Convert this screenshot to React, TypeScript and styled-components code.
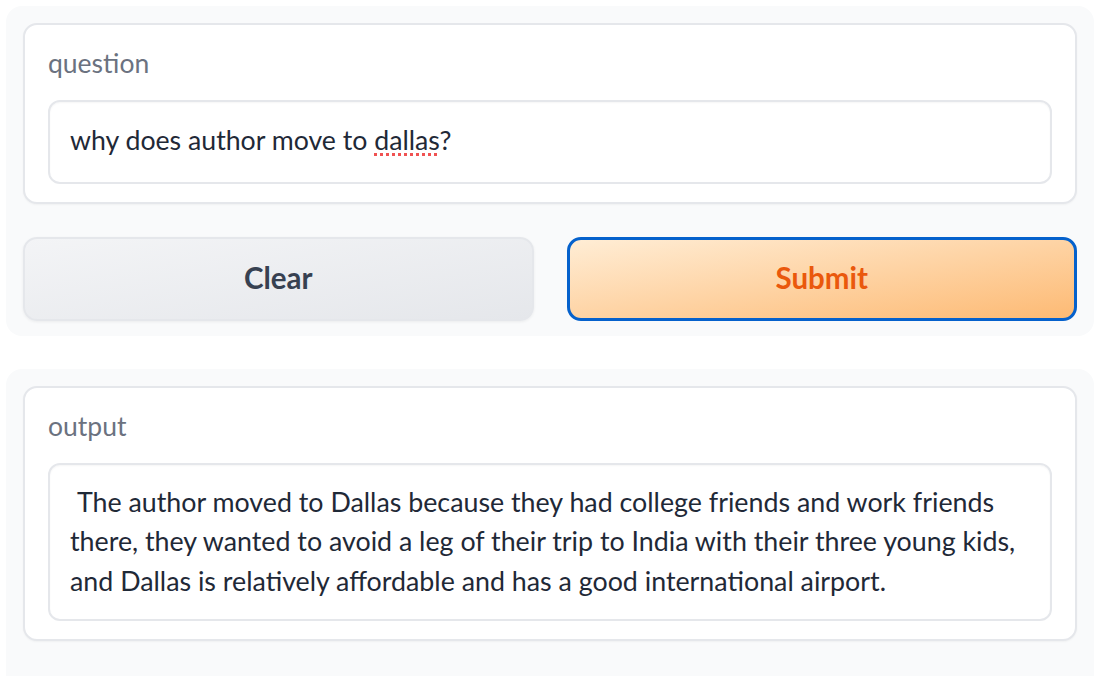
import { FC } from "react";
import styled, { createGlobalStyle } from "styled-components";

const Colors = {
  panel: "#f9fafb",
  border: "#e5e7eb",
  label: "#6b7280",
  text: "#1f2937",
  white: "#ffffff",
};

const GlobalStyle = createGlobalStyle`
  html, body {
    margin: 0;
    padding: 0;
    background: ${Colors.white};
  }
  body {
    font-family: "Lato", "Noto Sans", sans-serif;
  }
`;

const Page = styled.div`
  display: flex;
  flex-direction: column;
  gap: 33px;
  padding: 6px 8px 0 6px;
  width: 1102px;
  box-sizing: border-box;
`;

const Panel = styled.div<{ $open?: boolean }>`
  display: flex;
  flex-direction: column;
  gap: 33px;
  background: ${Colors.panel};
  border-radius: ${(p) => (p.$open ? "16px 16px 0 0" : "16px")};
  padding: 17px 17px ${(p) => (p.$open ? "36px" : "15px")} 17px;
`;

const Card = styled.div`
  display: flex;
  flex-direction: column;
  background: ${Colors.white};
  border: 2px solid ${Colors.border};
  border-radius: 14px;
  box-shadow: 0 1px 2px rgba(0, 0, 0, 0.04);
  padding: 22px 23px 18px 23px;
`;

const Label = styled.div`
  color: ${Colors.label};
  font-size: 26.5px;
  line-height: 32px;
  margin-bottom: 21px;
`;

const Field = styled.div<{ $multi?: boolean }>`
  border: 2px solid ${Colors.border};
  border-radius: 12px;
  box-shadow: inset 0 1px 2px rgba(0, 0, 0, 0.04);
  color: ${Colors.text};
  font-size: ${(p) => (p.$multi ? "26.8px" : "26.7px")};
  line-height: 39.5px;
  padding: ${(p) => (p.$multi ? "18px 8px 18px 20px" : "19px 20px 21px")};
  white-space: pre-wrap;
`;

const Misspelled = styled.span`
  text-decoration: underline dotted #f05252;
  text-decoration-thickness: 3px;
  text-underline-offset: 3px;
`;

const ButtonRow = styled.div`
  display: grid;
  grid-template-columns: 1fr 1fr;
  gap: 33px;
`;

const Button = styled.button<{ $primary?: boolean }>`
  height: 84px;
  border-radius: 14px;
  font-family: inherit;
  font-weight: 700;
  font-size: 29.5px;
  padding: 0 0 2px;
  cursor: pointer;
  ${(p) =>
    p.$primary
      ? `
    background: linear-gradient(to bottom right, #ffedd5, #fdba74);
    border: 3px solid #0561cc;
    color: #ea580c;
  `
      : `
    background: linear-gradient(to bottom right, #f3f4f6, #e5e7eb);
    border: 2px solid ${Colors.border};
    color: #374151;
    box-shadow: 0 1px 3px rgba(0, 0, 0, 0.06);
  `}
`;

const answer = [
  " The author moved to Dallas because they had college friends and work friends",
  "there, they wanted to avoid a leg of their trip to India with their three young kids,",
  "and Dallas is relatively affordable and has a good international airport.",
].join("\n");

const App: FC = () => (
  <>
    <GlobalStyle />
    <Page>
      <Panel>
        <Card>
          <Label>question</Label>
          <Field>
            why does author move to <Misspelled>dallas</Misspelled>?
          </Field>
        </Card>
        <ButtonRow>
          <Button>Clear</Button>
          <Button $primary>Submit</Button>
        </ButtonRow>
      </Panel>
      <Panel $open>
        <Card>
          <Label>output</Label>
          <Field $multi>{answer}</Field>
        </Card>
      </Panel>
    </Page>
  </>
);

export default App;
